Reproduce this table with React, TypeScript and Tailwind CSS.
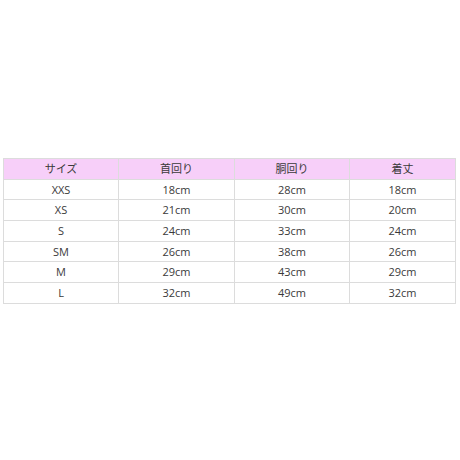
const rows = [
  ['XXS', '18cm', '28cm', '18cm'],
  ['XS', '21cm', '30cm', '20cm'],
  ['S', '24cm', '33cm', '24cm'],
  ['SM', '26cm', '38cm', '26cm'],
  ['M', '29cm', '43cm', '29cm'],
  ['L', '32cm', '49cm', '32cm'],
];

const heads = ['サイズ', '首回り', '胴回り', '着丈'];

export default function App() {
  return (
    <div className="w-[460px] h-[460px] bg-white pt-[158px] px-[3px] font-['Open_Sans','Noto_Sans_CJK_JP',sans-serif] text-[11px] text-[#3a3a3a]">
      <table className="w-[453px] border-collapse table-fixed">
        <colgroup>
          <col className="w-[115px]" />
          <col className="w-[116px]" />
          <col className="w-[115px]" />
          <col />
        </colgroup>
        <thead>
          <tr className="h-[20.7px] bg-[#f7cff9]">
            {heads.map((h) => (
              <th key={h} className="border border-[#dcdcdc] font-normal text-center p-0 leading-[14px]">
                {h}
              </th>
            ))}
          </tr>
        </thead>
        <tbody>
          {rows.map((r) => (
            <tr key={r[0]} className="h-[20.7px]">
              {r.map((c, i) => (
                <td key={i} className="border border-[#dcdcdc] text-center p-0 leading-[14px]">
                  {c}
                </td>
              ))}
            </tr>
          ))}
        </tbody>
      </table>
    </div>
  );
}
